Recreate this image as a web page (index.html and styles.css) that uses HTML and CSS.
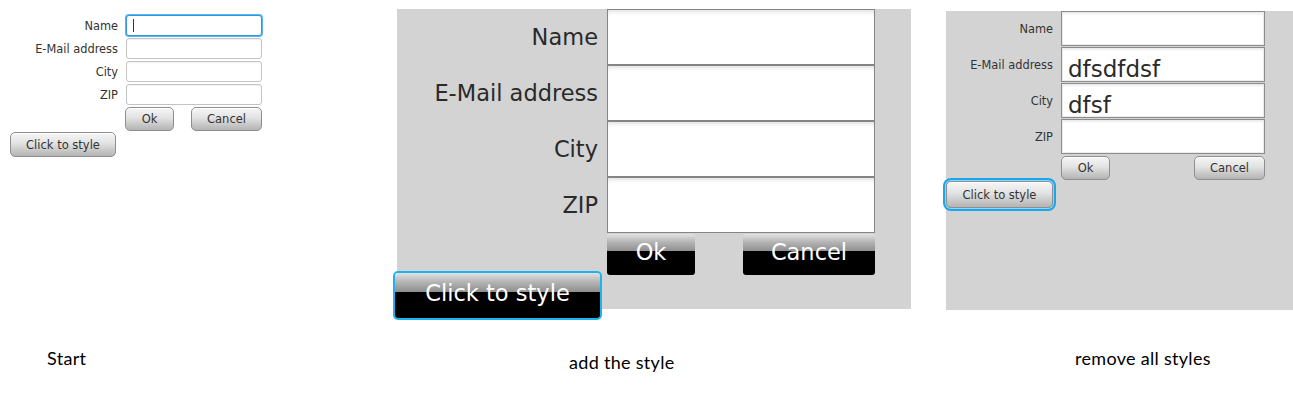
FILE: index.html
```html
<!DOCTYPE html>
<html lang="en">
<head>
<meta charset="utf-8">
<title>Style demo</title>
<link rel="stylesheet" href="styles.css">
</head>
<body>
<div class="screen">

  <section class="col col-a">
    <div class="form form-a">
      <div class="grid">
        <label class="lbl">Name</label>
        <div class="field focused"><span class="caret"></span></div>
        <label class="lbl">E-Mail address</label>
        <div class="field"></div>
        <label class="lbl">City</label>
        <div class="field"></div>
        <label class="lbl">ZIP</label>
        <div class="field"></div>
        <span></span>
        <div class="btn-row">
          <button class="btn btn-ok">Ok</button>
          <button class="btn btn-cancel">Cancel</button>
        </div>
      </div>
      <button class="btn btn-click">Click to style</button>
    </div>
    <p class="caption cap-a">Start</p>
  </section>

  <section class="col col-b">
    <div class="panel panel-b">
      <div class="grid">
        <label class="lbl">Name</label>
        <div class="field"></div>
        <label class="lbl">E-Mail address</label>
        <div class="field"></div>
        <label class="lbl">City</label>
        <div class="field"></div>
        <label class="lbl">ZIP</label>
        <div class="field"></div>
        <span></span>
        <div class="btn-row">
          <button class="btn btn-ok">Ok</button>
          <button class="btn btn-cancel">Cancel</button>
        </div>
      </div>
      <button class="btn btn-click">Click to style</button>
    </div>
    <p class="caption cap-b">add the style</p>
  </section>

  <section class="col col-c">
    <div class="panel panel-c">
      <div class="grid">
        <label class="lbl">Name</label>
        <div class="field"></div>
        <label class="lbl">E-Mail address</label>
        <div class="field"><span class="val">dfsdfdsf</span></div>
        <label class="lbl">City</label>
        <div class="field"><span class="val">dfsf</span></div>
        <label class="lbl">ZIP</label>
        <div class="field"></div>
        <span></span>
        <div class="btn-row">
          <button class="btn btn-ok">Ok</button>
          <button class="btn btn-cancel">Cancel</button>
        </div>
      </div>
      <button class="btn btn-click">Click to style</button>
    </div>
    <p class="caption cap-c">remove all styles</p>
  </section>

</div>
</body>
</html>
```

FILE: styles.css
```css
html, body {
  margin: 0;
  padding: 0;
  background: #ffffff;
}

.screen {
  display: flex;
  align-items: flex-start;
  width: 1293px;
  height: 406px;
  overflow: hidden;
}

.col {
  display: flex;
  flex-direction: column;
  flex-shrink: 0;
}

.grid {
  display: grid;
}

.lbl {
  display: flex;
  align-items: center;
  justify-content: flex-end;
  font-family: "DejaVu Sans", sans-serif;
  color: #333333;
  white-space: nowrap;
}

.field {
  box-sizing: border-box;
  background: #ffffff;
}

.btn-row {
  display: flex;
  justify-content: space-between;
  align-items: flex-start;
}

.btn {
  box-sizing: border-box;
  font-family: "DejaVu Sans", sans-serif;
  padding: 0;
  margin: 0;
  cursor: pointer;
}

/* ---------- Caspian-style buttons (columns A and C) ---------- */
.col-a .btn,
.col-c .btn {
  font-size: 11.5px;
  color: #333333;
  border: 1px solid #8e8e8e;
  border-radius: 5px;
  background: linear-gradient(to bottom, #f6f6f6 0%, #e2e2e2 45%, #c4c4c4 80%, #b4b4b4 100%);
  box-shadow: inset 0 1px 0 #ffffff;
}

.col-a .lbl,
.col-c .lbl {
  font-size: 11.4px;
  padding-right: 8px;
}

/* ---------- Column A: Start ---------- */
.col-a {
  width: 397px;
}

.form-a {
  margin: 15px 0 0 10px;
}

.form-a .grid {
  grid-template-columns: 116px 136px;
  grid-template-rows: repeat(4, 21px) 24px;
  row-gap: 2px;
}

.form-a .field {
  border: 1px solid #c4c4c4;
  border-radius: 3px;
  box-shadow: inset 0 1px 1px rgba(0, 0, 0, 0.06);
  display: flex;
  align-items: center;
  padding-left: 6px;
}

.form-a .field.focused {
  border-color: #2f96e0;
  box-shadow: 0 0 0 1px #5ab4f2;
}

.caret {
  display: block;
  width: 1px;
  height: 13px;
  background: #333333;
}

.form-a .btn-row {
  margin-left: -1px;
}

.form-a .btn-ok {
  width: 49px;
  height: 24px;
}

.form-a .btn-cancel {
  width: 71px;
  height: 24px;
}

.form-a .btn-click {
  display: block;
  width: 106px;
  height: 25px;
  margin-top: 1px;
}

/* ---------- captions ---------- */
.caption {
  margin: 0;
  font-family: Lato, "Open Sans", sans-serif;
  font-size: 18px;
  line-height: 22px;
  color: #000000;
  letter-spacing: 0.3px;
  white-space: nowrap;
}

.cap-a {
  margin-top: 190px;
  margin-left: 47px;
}

.cap-b {
  margin-top: 42px;
  margin-left: 172px;
}

.cap-c {
  margin-top: 37px;
  margin-left: 129px;
}

/* ---------- Column B: add the style ---------- */
.col-b {
  width: 514px;
  margin-top: 9px;
}

.panel-b {
  width: 514px;
  height: 300px;
  background: #d3d3d3;
}

.panel-b .grid {
  grid-template-columns: 210px 268px;
  grid-template-rows: repeat(4, 56px) 42px;
}

.panel-b .lbl {
  font-size: 22.5px;
  padding-right: 9px;
  color: #2a2a2a;
}

.panel-b .field {
  border: 1px solid #858585;
  box-shadow: inset 0 4px 4px -2px rgba(0, 0, 0, 0.12);
}

.panel-b .btn-row {
  padding-top: 1px;
}

.panel-b .btn {
  border: none;
  border-radius: 3px;
  color: #ffffff;
  font-size: 22.5px;
  line-height: 1;
  padding-bottom: 4px;
  background: linear-gradient(to bottom, #e2e2e2 0%, #b4b4b4 20%, #8e8e8e 42%, #000000 42.5%, #000000 100%);
}

.panel-b .btn-ok {
  width: 88px;
  height: 41px;
}

.panel-b .btn-cancel {
  width: 132px;
  height: 41px;
}

.panel-b .btn-click {
  display: block;
  width: 205px;
  height: 45px;
  margin-top: -2px;
  margin-left: -2px;
  box-shadow: 0 0 0 2px #1ab4f2;
  background: linear-gradient(to bottom, #e2e2e2 0%, #b4b4b4 20%, #8e8e8e 42%, #000000 43%, #000000 100%);
}

/* ---------- Column C: remove all styles ---------- */
.col-c {
  width: 347px;
  margin-left: 35px;
  margin-top: 11px;
}

.panel-c {
  width: 347px;
  height: 299px;
  background: #d3d3d3;
}

.panel-c .grid {
  grid-template-columns: 115px 204px;
  grid-template-rows: repeat(4, 35px) 26px;
  row-gap: 1px;
}

.panel-c .field {
  border: 1px solid #8c8c8c;
  box-shadow: inset 0 0 0 1px #ececec, inset 0 2px 2px rgba(0, 0, 0, 0.08);
  display: flex;
  align-items: flex-end;
  padding-left: 6px;
}

.val {
  font-family: "DejaVu Sans", sans-serif;
  font-size: 23px;
  line-height: 23px;
  color: #2a2a2a;
}

.panel-c .btn-row {
  padding-top: 1px;
}

.panel-c .btn-ok {
  width: 49px;
  height: 24px;
}

.panel-c .btn-cancel {
  width: 71px;
  height: 24px;
}

.panel-c .btn-click {
  display: block;
  width: 107px;
  height: 27px;
  margin-top: 0;
  box-shadow: inset 0 1px 0 #ffffff, 0 0 0 1px #8fd6f8, 0 0 0 3px #19a6ee;
}
```
